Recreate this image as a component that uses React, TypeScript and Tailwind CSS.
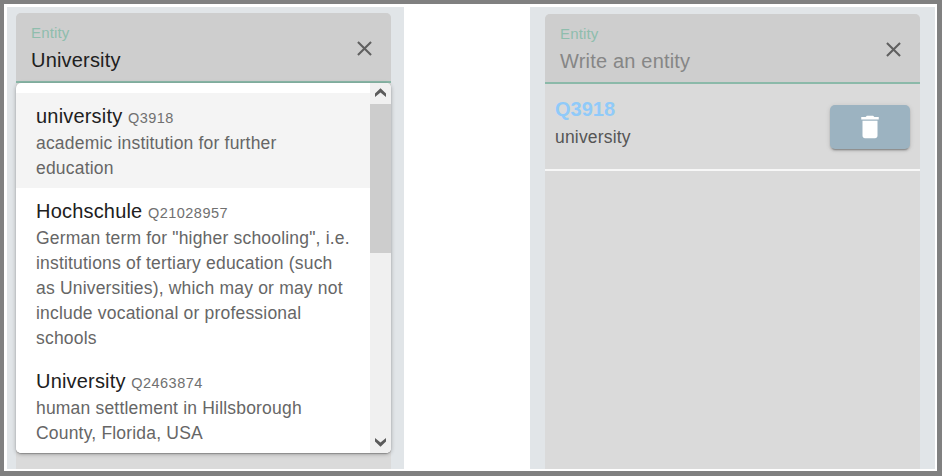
type Entity = { name: string; id: string; lines: string[] };

const entities: Entity[] = [
  { name: 'university', id: 'Q3918', lines: ['academic institution for further', 'education'] },
  {
    name: 'Hochschule',
    id: 'Q21028957',
    lines: [
      'German term for "higher schooling", i.e.',
      'institutions of tertiary education (such',
      'as Universities), which may or may not',
      'include vocational or professional',
      'schools',
    ],
  },
  { name: 'University', id: 'Q2463874', lines: ['human settlement in Hillsborough', 'County, Florida, USA'] },
];

function SearchField({ value, placeholder }: { value?: string; placeholder?: string }) {
  return (
    <div className="flex h-[70px] shrink-0 items-center justify-between rounded-t-[5px] border-b-2 border-[#8bb9a9] bg-[#cecece] pl-[15px] pr-[14px]">
      <div className="flex flex-col pt-[2px]">
        <label className="text-[15px] leading-[18px] tracking-[0.14px] text-[#8fbdad]">Entity</label>
        <div className={`mt-[5px] text-[20px] leading-[26px] tracking-[0.19px] ${value ? 'text-[#202020]' : 'text-[#868686]'}`}>
          {value ?? placeholder}
        </div>
      </div>
      <svg className="mt-[2px] size-[25px]" viewBox="0 0 24 24" fill="#606060">
        <path d="M19 6.41L17.59 5 12 10.59 6.41 5 5 6.41 10.59 12 5 17.59 6.41 19 12 13.41 17.59 19 19 17.59 13.41 12z" />
      </svg>
    </div>
  );
}

function Chevron({ down = false }: { down?: boolean }) {
  return (
    <div className={`flex h-[21px] shrink-0 justify-center bg-[#f0f0f0] ${down ? 'items-end pb-[6px]' : 'items-start pt-[5px]'}`}>
      <svg className={down ? 'rotate-180' : ''} width="11" height="9" viewBox="0 0 11 9">
        <path d="M0 5.5L5.5 0.2 11 5.5V8.9L5.5 4.4 0 8.9z" fill="#5b5b5b" />
      </svg>
    </div>
  );
}

function Dropdown() {
  return (
    <div className="flex h-[370px] shrink-0 overflow-hidden rounded-[5px] bg-white shadow-[0_1px_4px_rgba(0,0,0,0.3),0_1px_1px_rgba(0,0,0,0.22)]">
      <ul className="w-[354px] pt-[10px]">
        {entities.map((entity, index) => (
          <li key={entity.id} className={`px-5 py-[7.5px] ${index === 0 ? 'bg-[#f4f4f4]' : 'bg-white'}`}>
            <div className="h-[30px] whitespace-nowrap text-[20px] leading-[30px] tracking-[0.19px] text-[#202020]">
              {entity.name}
              <span className="ml-[5.5px] text-[14.5px] tracking-[0.48px] text-[#707070]">{entity.id}</span>
            </div>
            {entity.lines.map((line) => (
              <p key={line} className="whitespace-nowrap text-[17.5px] leading-[25px] tracking-[0.19px] text-[#666]">
                {line}
              </p>
            ))}
          </li>
        ))}
      </ul>
      <div className="flex w-[21px] flex-col bg-[#f0f0f0]">
        <Chevron />
        <div className="h-[149px] bg-[#cdcdcd]" />
        <div className="flex-1" />
        <Chevron down />
      </div>
    </div>
  );
}

export default function App() {
  return (
    <main className="flex h-[476px] w-[942px] justify-between overflow-hidden border-b-[5px] border-l-4 border-r-[5px] border-t-4 border-[#808080] bg-white pb-[2px] pl-[3px] pr-[2px] pt-[3px] font-['Liberation_Sans',Arial,sans-serif]">
      <section className="flex w-[397px] flex-col bg-[#e1e5e8] pl-[9px] pr-[13px] pt-[6px]">
        <div className="flex flex-1 flex-col rounded-t-[5px] bg-[#dadada]">
          <SearchField value="University" />
          <Dropdown />
        </div>
      </section>
      <section className="flex w-[405px] flex-col bg-[#e1e5e8] px-[15px] pt-[7px]">
        <div className="flex flex-1 flex-col rounded-t-[5px] bg-[#dadada]">
          <SearchField placeholder="Write an entity" />
          <div className="flex h-[87px] items-center justify-between border-b-2 border-[#f7f7f7] px-[10px]">
            <div className="-mt-[10px]">
              <div className="text-[20px] font-bold leading-[30px] text-[#90caf9]">Q3918</div>
              <div className="pt-px text-[17.5px] leading-[25px] tracking-[0.19px] text-[#555]">university</div>
            </div>
            <button className="flex h-[44px] w-20 items-center justify-center rounded-[5px] bg-[#9cb3c1] shadow-[0_3px_1px_-2px_rgba(0,0,0,0.2),0_2px_2px_rgba(0,0,0,0.14),0_1px_5px_rgba(0,0,0,0.12)]">
              <svg className="size-[30px]" viewBox="0 0 24 24" fill="white">
                <path d="M6 19c0 1.1.9 2 2 2h8c1.1 0 2-.9 2-2V7H6v12zM19 4h-3.5l-1-1h-5l-1 1H5v2h14V4z" />
              </svg>
            </button>
          </div>
        </div>
      </section>
    </main>
  );
}
